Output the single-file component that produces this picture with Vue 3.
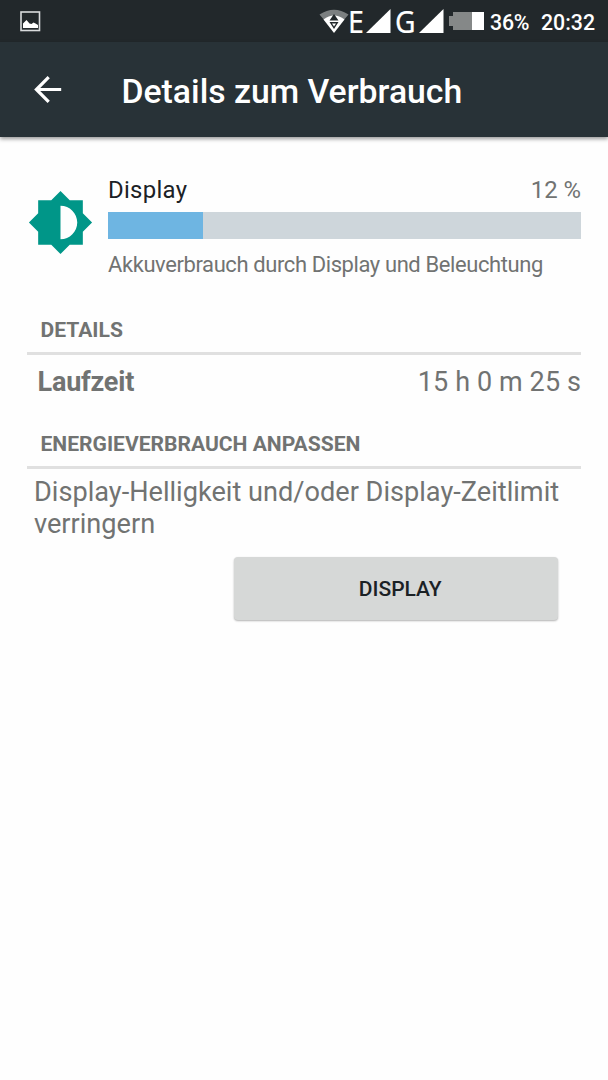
<script setup>
const usage = { name: 'Display', percent: 12, barWidth: 20 }
</script>

<template>
  <div class="screen">
    <header class="status">
      <svg class="picture" width="22" height="22" viewBox="0 0 22 22">
        <rect x="1" y="1" width="18.500" height="18.500" fill="none" stroke="#d9dbdc" stroke-width="1.600" />
        <path d="M3 17v-4.500l3.500-3.500 3 3.500 2 .5 2-1.500 2 1 2.500 1.500v3z" fill="#fff" />
      </svg>
      <svg class="wifi" width="30" height="26" viewBox="0 0 30 26">
        <path d="M0.500 5.500Q15-4 29.500 5.500L24 12Q15 5 6 12z" fill="#7b7f80" />
        <path d="M4.500 10.500Q15 2.500 25.500 10.500L15 24z" fill="#fff" />
        <path d="M15 5l4.500 6.500h-9zM10.500 13h9l-4.500 7z" fill="#22282b" />
        <path d="M13 14.500h4l-2 3z" fill="#fff" />
      </svg>
      <span class="net net-e">E</span>
      <svg class="sig1" width="25" height="24" viewBox="0 0 25 24"><path d="M0 24L24.500 0v24z" fill="#fff" /></svg>
      <span class="net net-g">G</span>
      <svg class="sig2" width="25" height="24" viewBox="0 0 25 24"><path d="M0 24L24.500 0v24z" fill="#fff" /></svg>
      <svg class="battery" width="35" height="18" viewBox="0 0 35 18">
        <path d="M4 0h19v18H4v-4H0V4h4z" fill="#858888" />
        <path d="M23 0h12v18H23z" fill="#fff" />
      </svg>
      <span class="level">36%</span>
      <span class="clock">20:32</span>
    </header>

    <nav class="appbar">
      <svg width="28" height="28" viewBox="0 0 28 28" fill="none" stroke="#fff" stroke-width="3.200">
        <path d="M27.200 13.500H3M14.700 1.200L2.400 13.500l12.300 12.300" />
      </svg>
      <h1>Details zum Verbrauch</h1>
    </nav>

    <main>
      <section class="usage">
        <svg class="brightness" width="67" height="67" viewBox="0 0 24 24">
          <path fill="#009688" d="M20 15.310L23.310 12 20 8.690V4h-4.690L12 .690 8.690 4H4v4.690L.690 12 4 15.310V20h4.690L12 23.310 15.310 20H20zM12 18V6c3.310 0 6 2.690 6 6s-2.690 6-6 6z" />
        </svg>
        <div class="info">
          <div class="row"><span class="name">{{ usage.name }}</span><span>{{ usage.percent }} %</span></div>
          <div class="track"><div class="fill" :style="{ width: usage.barWidth + '%' }"></div></div>
          <p class="note">Akkuverbrauch durch Display und Beleuchtung</p>
        </div>
      </section>

      <h2>DETAILS</h2>
      <div class="runtime"><b>Laufzeit</b><span>15 h 0 m 25 s</span></div>

      <h2>ENERGIEVERBRAUCH ANPASSEN</h2>
      <p class="hint">Display-Helligkeit und/oder Display-Zeitlimit verringern</p>
      <button><span>DISPLAY</span></button>
    </main>
  </div>
</template>

<style>
body { margin: 0; background: #fefefe; }
</style>

<style scoped>
.screen { width: 608px; height: 1080px; overflow: hidden; background: #fefefe; font-family: Roboto, sans-serif; color: #717372; }
h1, h2, p { margin: 0; }
svg { flex: none; display: block; }
span, b { white-space: nowrap; }
.status { height: 42px; box-sizing: border-box; display: flex; align-items: flex-start; background: #22282b; color: #fff; }
.picture { margin: 11px 0 0 20px; }
.wifi { margin: 9px 0 0 277px; }
.net { font: 400 31px/42px "Noto Sans", sans-serif; flex: none; -webkit-text-stroke: .2px #fff; transform-origin: left; }
.net-e { width: 18px; margin-left: -1px; transform: scaleX(.92); }
.net-g { width: 24px; margin-left: 4px; transform: scaleX(.91); }
.sig1, .sig2 { margin-top: 9px; }
.battery { margin: 12px 0 0 5px; }
.level, .clock { font-size: 21.300px; font-weight: 500; line-height: 45px; flex: none; }
.level { margin-left: 6px; width: 51px; letter-spacing: -.2px; }
.appbar { position: relative; height: 94.500px; display: flex; align-items: center; background: #283237; color: #fff; box-shadow: 0 2px 4px rgba(0, 0, 0, .4); }
.appbar svg { margin: 1px 0 0 33.500px; }
h1 { font-size: 33.750px; font-weight: 500; line-height: 40px; margin-left: 60px; padding-top: 5px; white-space: nowrap; }
main { padding: 39.500px 27px 0; }
.usage { display: flex; }
.brightness { margin: 13px 0 0 0; }
.info { margin-left: 14px; flex: 1; }
.row { display: flex; justify-content: space-between; font-size: 23.900px; line-height: 28px; }
.name { color: #1b2125; letter-spacing: .3px; }
.track { height: 27px; margin-top: 8px; background: #ced6db; }
.fill { height: 100%; background: #6eb5e2; }
.note { font-size: 21.950px; letter-spacing: -.38px; line-height: 26px; margin-top: 13px; white-space: nowrap; }
h2 { font-size: 21.070px; font-weight: 700; line-height: 24px; margin-top: 39.500px; padding: 0 0 10.500px 13.500px; border-bottom: 3px solid #e0e0e0; white-space: nowrap; }
.runtime { display: flex; justify-content: space-between; height: 32px; padding: 10.500px 0 0 10.500px; font-size: 27px; line-height: 32px; }
.runtime b { letter-spacing: -.2px; }
.runtime span { letter-spacing: .1px; }
.runtime + h2 { margin-top: 34px; }
.hint { font-size: 27.150px; line-height: 32px; padding: 7px 0 0 7px; }
button { display: block; width: 324.500px; height: 63px; margin: 17px 0 0 206.500px; padding: 0; border: 0; border-radius: 4px; background: #d6d8d7; box-shadow: 0 1px 2px rgba(0, 0, 0, .3); font: 500 21px/64px Roboto, sans-serif; color: #1b2125; text-align: center; }
button span { padding-left: 9px; }
</style>
